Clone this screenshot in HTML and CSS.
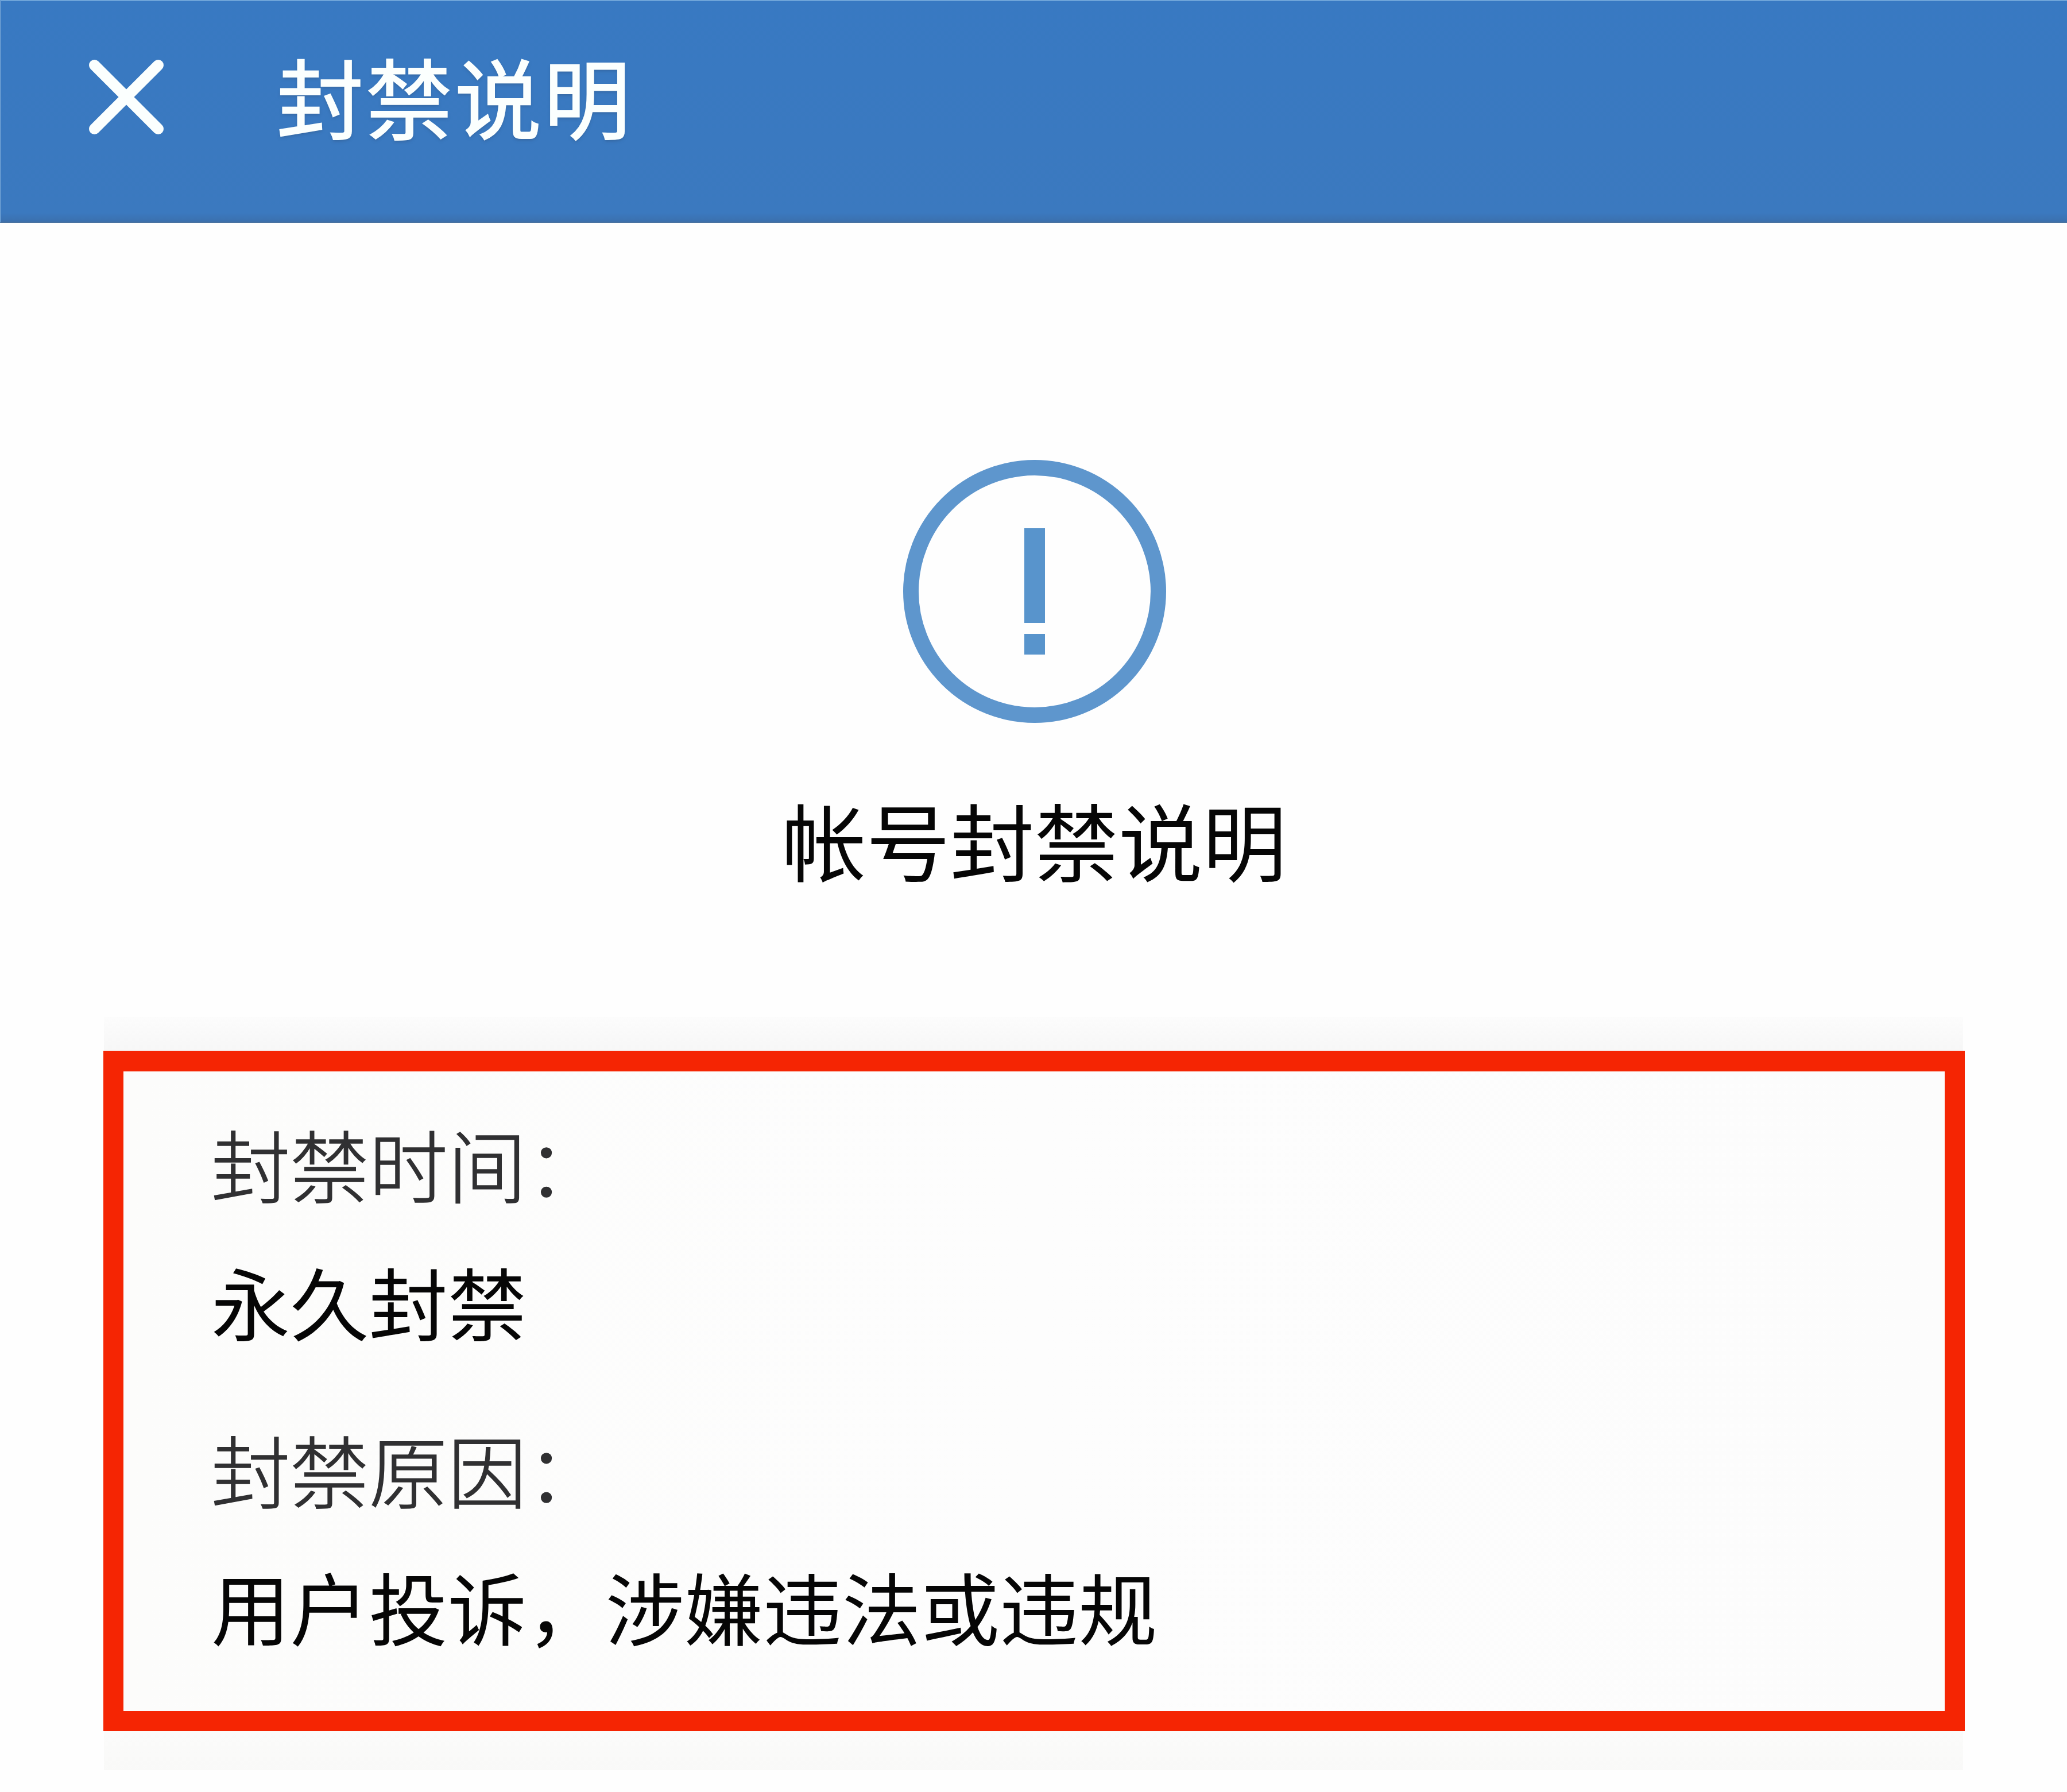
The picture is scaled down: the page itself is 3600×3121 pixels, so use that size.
FILE: index.html
```html
<!DOCTYPE html>
<html lang="zh-CN">
<head>
<meta charset="utf-8">
<title>封禁说明</title>
<link rel="stylesheet" href="styles.css">
</head>
<body>
<header class="topbar">
  <svg class="close" viewBox="0 0 130 130" aria-hidden="true"><path d="M9.5 9.5L120.5 120.5M120.5 9.5L9.5 120.5"/></svg>
  <h1 class="topbar-title">封禁说明</h1>
</header>
<main class="content">
  <svg class="alert" viewBox="0 0 458 458" aria-hidden="true">
    <circle cx="229" cy="229" r="215.5"/>
    <path d="M211 119h36v165h-36zM211 303h36v36h-36z"/>
  </svg>
  <h2 class="heading">帐号封禁说明</h2>
  <section class="panel">
    <dl class="details">
      <dt class="label">封禁时间：</dt>
      <dd class="value">永久封禁</dd>
      <dt class="label">封禁原因：</dt>
      <dd class="value">用户投诉，涉嫌违法或违规</dd>
    </dl>
  </section>
</main>
</body>
</html>
```

FILE: styles.css
```css
* { box-sizing: border-box; margin: 0; padding: 0; }
body {
  width: 3600px;
  height: 3121px;
  overflow: hidden;
  background: #fefefe;
  color: #060606;
  font-family: "Noto Sans CJK SC", sans-serif;
}
.topbar {
  display: flex;
  align-items: flex-start;
  height: 388px;
  padding: 102px 0 0 153px;
  background: linear-gradient(#3879c2, #3b79bf 96%, #3b70ae);
  border-top: 2px solid #6fa5d9;
  border-left: 2px solid #6498cf;
  border-bottom: 2px solid #4670a0;
}
.close {
  width: 130px;
  height: 130px;
  margin-right: 197px;
  fill: none;
  stroke: #fbfffe;
  stroke-width: 19;
  stroke-linecap: round;
}
.topbar-title {
  margin-top: -16px;
  font-size: 151px;
  line-height: 154px;
  letter-spacing: 4px;
  font-weight: 400;
  color: #fbfffe;
  -webkit-text-stroke: 2px #fbfffe;
  text-shadow: 0 3px 5px rgba(50, 85, 130, .5);
}
.content {
  display: flex;
  flex-direction: column;
  align-items: center;
  padding-top: 413px;
}
.alert { width: 458px; height: 458px; margin-left: 3px; fill: #5894cc; }
.alert circle { fill: none; stroke: #5e96cd; stroke-width: 27; }
.heading {
  margin: 128px 0 0 3px;
  font-size: 146.5px;
  line-height: 147px;
  font-weight: 400;
}
.panel {
  width: 3238px;
  height: 1312px;
  margin-top: 237px;
  padding-top: 59px;
  background: linear-gradient(#fcfcfc, #f7f7f7 4.5%, #fbfbfa 95%, #f9f9f8);
}
.details {
  width: 3242px;
  height: 1185px;
  margin-left: -1px;
  padding: 91px 155px 0 153px;
  border: solid #f52503;
  border-width: 36px 35px 35px;
  background: linear-gradient(90deg, #fcfcfb, #fdfdfd 50%, #fcfcfc);
  font-size: 137.3px;
  line-height: 138px;
}
.label { color: #303032; font-weight: 300; -webkit-text-stroke: 1.6px #303032; }
.value { margin: 102px 0 154px; }
.value:last-child { margin-top: 101px; }
```
